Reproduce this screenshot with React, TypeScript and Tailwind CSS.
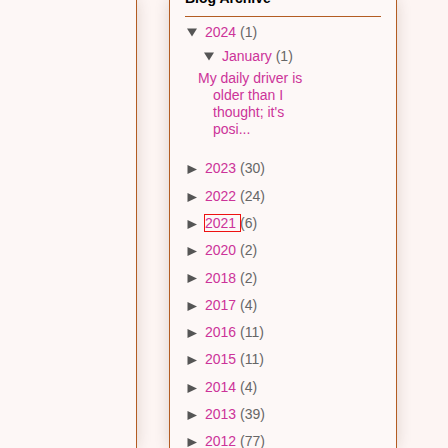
import React from 'react';

const years: { year: string; count: number; focus?: boolean }[] = [
  { year: '2023', count: 30 },
  { year: '2022', count: 24 },
  { year: '2021', count: 6, focus: true },
  { year: '2020', count: 2 },
  { year: '2018', count: 2 },
  { year: '2017', count: 4 },
  { year: '2016', count: 11 },
  { year: '2015', count: 11 },
  { year: '2014', count: 4 },
  { year: '2013', count: 39 },
  { year: '2012', count: 77 },
];

function Toggle({ open }: { open?: boolean }) {
  return (
    <span className="inline-block w-[20px] pl-[2px] align-middle">
      <svg width="10" height="9" viewBox="0 0 10 9" className="block">
        {open ? (
          <polygon points="0,0.5 10,0.5 5,8.5" fill="#555" />
        ) : (
          <polygon points="0.5,0 10,4.5 0.5,9" fill="#555" />
        )}
      </svg>
    </span>
  );
}

export default function App() {
  return (
    <div
      className="h-[448px] overflow-hidden bg-[#fdf5f3] flex gap-[32px] text-[14px] leading-[17px]"
      style={{ fontFamily: '"Liberation Sans", Arial, sans-serif' }}
    >
      <div className="w-[137px] shrink-0 bg-[#fdf7f6] border-r border-[#b35c22] shadow-[0_0_14px_rgba(60,30,20,0.16)]" />
      <div className="w-[228px] shrink-0 bg-[#fdf8f7] border-x border-[#b35c22] shadow-[0_0_14px_rgba(60,30,20,0.16)] px-[15px]">
        <h2 className="-mt-[10px] pb-[9px] border-b border-[#b35c22] font-bold text-black">
          Blog Archive
        </h2>
        <ul className="mt-[6.5px]">
          <li>
            <Toggle open />
            <a className="text-[#cc3399]">2024</a>{' '}
            <span className="text-[#666]">(1)</span>
            <ul className="mt-[7px] ml-[17px]">
              <li>
                <Toggle open />
                <a className="text-[#cc3399]">January</a>{' '}
                <span className="text-[#666]">(1)</span>
                <ul className="mt-[5px] -ml-[4px] w-[115px] pl-[15px] -indent-[15px]">
                  <li>
                    <a className="text-[#cc3399]">
                      My daily driver is older than I thought; it's posi...
                    </a>
                  </li>
                </ul>
              </li>
            </ul>
          </li>
        </ul>
        <ul className="mt-[17.85px]">
          {years.map((y) => (
            <li key={y.year} className="py-[5.15px] whitespace-nowrap">
              <Toggle />
              {y.focus ? (
                <>
                  <a className="text-[#cc3399] outline outline-1 outline-[#ee1111]">
                    {y.year}{' '}
                  </a>
                  <span className="text-[#666]">({y.count})</span>
                </>
              ) : (
                <>
                  <a className="text-[#cc3399]">{y.year}</a>{' '}
                  <span className="text-[#666]">({y.count})</span>
                </>
              )}
            </li>
          ))}
        </ul>
      </div>
    </div>
  );
}
